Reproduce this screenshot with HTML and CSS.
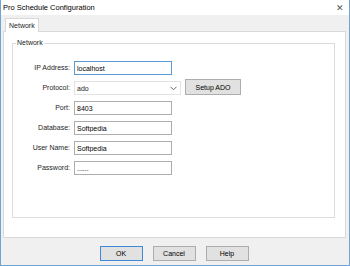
FILE: index.html
```html
<!DOCTYPE html>
<html>
<head>
    <title>Pro Schedule Configuration</title>
    <link rel="stylesheet" href="styles.css">
</head>
<body>
    <div class="window">
        <div class="titlebar">
            <span class="title">Pro Schedule Configuration</span>
            <span class="close">&#x2715;</span>
        </div>

        <div class="client">
            <div class="tabs">
                <div class="tab active">Network</div>
            </div>

            <div class="tab-panel">
                <fieldset class="group">
                    <legend>Network</legend>
                    <div class="form">
                        <label>IP Address:</label>
                        <div class="row"><input class="field focused" value="localhost"></div>

                        <label>Protocol:</label>
                        <div class="row">
                            <div class="combo">
                                <span>ado</span>
                                <svg width="7" height="5" viewBox="0 0 7 5"><path d="M0.5 0.8 L3.5 3.8 L6.5 0.8" fill="none" stroke="#666" stroke-width="1"/></svg>
                            </div>
                            <button class="btn small">Setup ADO</button>
                        </div>

                        <label>Port:</label>
                        <div class="row"><input class="field" value="8403"></div>

                        <label>Database:</label>
                        <div class="row"><input class="field" value="Softpedia"></div>

                        <label>User Name:</label>
                        <div class="row"><input class="field" value="Softpedia"></div>

                        <label>Password:</label>
                        <div class="row"><input class="field" value="......"></div>
                    </div>
                </fieldset>
            </div>

            <div class="actions">
                <button class="btn default">OK</button>
                <button class="btn">Cancel</button>
                <button class="btn">Help</button>
            </div>
        </div>
    </div>
</body>
</html>
```

FILE: styles.css
```css
/* Base styles */
* {
    margin: 0;
    padding: 0;
    box-sizing: border-box;
}

body {
    font-family: "Liberation Sans", Arial, sans-serif;
    font-size: 7px;
    color: #1e1e1e;
    background-color: #fff;
}

.window {
    width: 350px;
    height: 266px;
    display: flex;
    flex-direction: column;
    border: 1px solid #6ea3d8;
    border-top: none;
}

/* Title bar */
.titlebar {
    height: 15px;
    display: flex;
    align-items: center;
    justify-content: space-between;
    padding: 0 5px 0 2px;
    background-color: #fff;
}

.title {
    font-size: 7.5px;
    color: #000;
}

.close {
    font-size: 9px;
    color: #555;
}

/* Client area */
.client {
    flex: 1;
    display: flex;
    flex-direction: column;
    background-color: #f0f0f0;
    padding: 3px 3px 4px 2px;
}

.tabs {
    display: flex;
    padding-left: 2px;
}

.tab {
    height: 14px;
    width: 34px;
    padding: 3px 0 0 3px;
    background-color: #fff;
    border: 1px solid #d9d9d9;
    border-bottom: none;
    margin-bottom: -1px;
    position: relative;
    z-index: 1;
}

.tab-panel {
    height: 207px;
    background-color: #fff;
    border: 1px solid #d9d9d9;
    padding: 7px 10px 0 8px;
}

/* Group box */
.group {
    height: 179px;
    border: 1px solid #dcdcdc;
}

.group legend {
    margin-left: 3px;
    padding: 0 1px;
    line-height: 8px;
}

.form {
    display: grid;
    grid-template-columns: 57px auto;
    grid-auto-rows: 14px;
    column-gap: 4px;
    row-gap: 6px;
    margin-top: 14px;
}

.form label {
    text-align: right;
    line-height: 14px;
}

.row {
    display: flex;
    align-items: center;
    gap: 4px;
    height: 14px;
}

.field {
    width: 98px;
    height: 14px;
    border: 1px solid #adadad;
    font-family: inherit;
    font-size: 7px;
    color: #000;
    padding: 0 2px;
    outline: none;
    background: #fff;
}

.field.focused {
    border-color: #5b9bd5;
}

.combo {
    width: 107px;
    height: 14px;
    border: 1px solid #e3e3e3;
    display: flex;
    align-items: center;
    justify-content: space-between;
    padding: 0 3px 0 2px;
    background: #fff;
}

/* Buttons */
.btn {
    font-family: inherit;
    font-size: 7px;
    color: #000;
    background-color: #e1e1e1;
    border: 1px solid #adadad;
    width: 43px;
    height: 15px;
}

.btn.small {
    width: 56px;
    height: 16px;
    margin-top: -2px;
}

.btn.default {
    border-color: #3c8ad8;
}

.actions {
    display: flex;
    justify-content: center;
    gap: 10px;
    margin-top: 8px;
    padding-right: 1px;
}
```
